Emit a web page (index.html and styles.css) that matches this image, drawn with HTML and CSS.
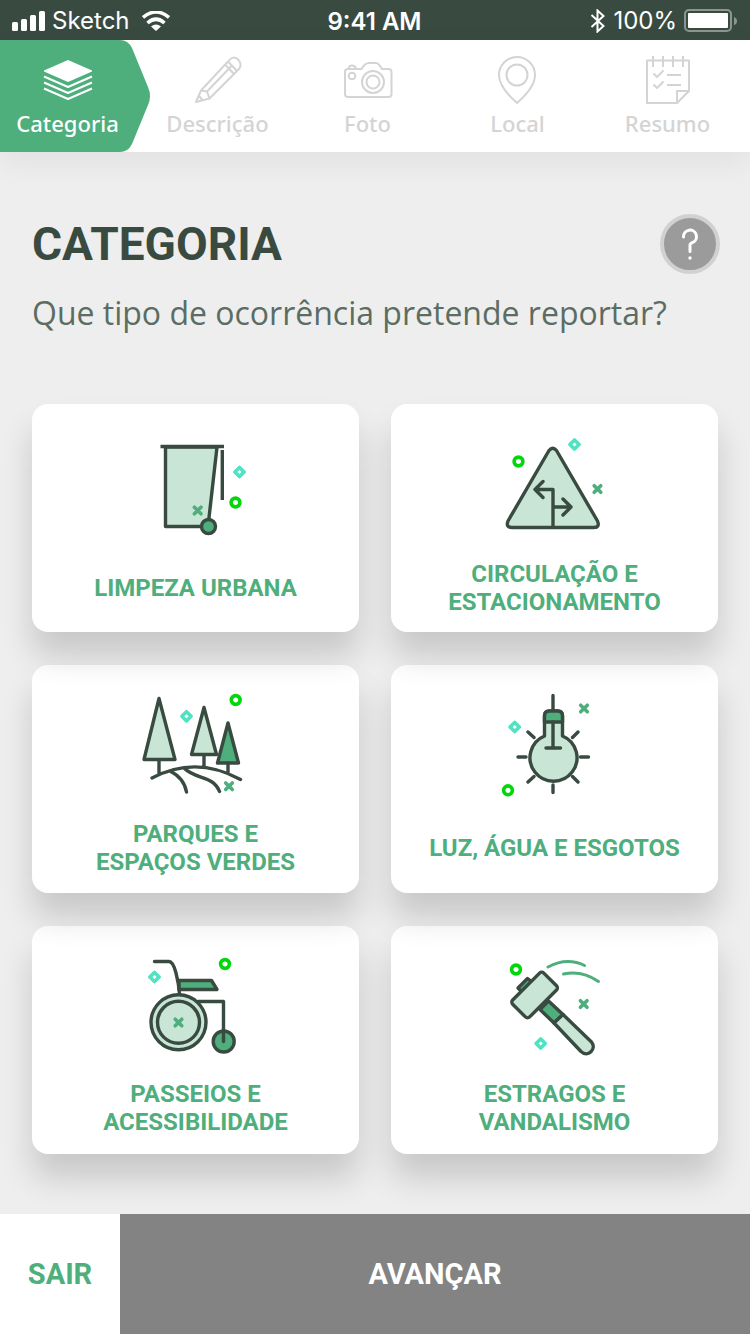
FILE: index.html
```html
<!DOCTYPE html>
<html lang="pt">
<head>
<meta charset="utf-8">
<meta name="viewport" content="width=device-width, initial-scale=1">
<title>Categoria</title>
<link rel="stylesheet" href="styles.css">
</head>
<body>
<svg class="sprite" aria-hidden="true">
  <symbol id="ring" viewBox="-7 -7 14 14"><circle r="4.4" fill="#fff" stroke="#00d80a" stroke-width="3.6"/></symbol>
  <symbol id="gem" viewBox="-7 -7 14 14"><path d="M0-4.600 4.600 0 0 4.600-4.600 0z" fill="#fff" stroke="#50e3c2" stroke-width="3.6" stroke-linejoin="round"/></symbol>
  <symbol id="cross" viewBox="-7 -7 14 14"><path d="M-3.300-3.300 3.300 3.300M3.300-3.300-3.300 3.300" stroke="#4eae7c" stroke-width="3.6" stroke-linecap="round"/></symbol>
</svg>
<div class="screen">
  <div class="status">
    <div class="status-side">
      <svg class="signal" viewBox="0 0 33 20" aria-hidden="true"><rect y="11" width="6" height="9" rx="1.5"/><rect x="9" y="8" width="6" height="12" rx="1.5"/><rect x="18" y="4" width="6" height="16" rx="1.5"/><rect x="27" width="6" height="20" rx="1.5"/></svg>
      <span class="carrier">Sketch</span>
      <svg class="wifi" viewBox="0 0 28 20" aria-hidden="true"><path d="M1 6.500Q14-4.500 27 6.500M5.500 12Q14 4.500 22.500 12" fill="none" stroke="#fff" stroke-width="3.600"/><path d="M9 15.500Q14 11.500 19 15.500L14 20z" fill="#fff"/></svg>
    </div>
    <time class="clock">9:41 AM</time>
    <div class="status-side status-end">
      <svg class="bluetooth" viewBox="0 0 16 24" aria-hidden="true"><path d="M1.500 6 13.500 17 7.500 22.500V1.500L13.500 7 1.500 18" fill="none" stroke="#fff" stroke-width="2"/></svg>
      <span>100%</span>
      <svg class="battery" viewBox="0 0 53 24" aria-hidden="true"><rect x="1" y="1" width="46" height="21" rx="4" fill="none" stroke="#8a968e" stroke-width="2"/><rect x="4" y="4" width="40" height="15" rx="1" fill="#fff"/><path d="M50 8q3 1 3 4t-3 4z" fill="#8a968e"/></svg>
    </div>
  </div>

  <nav class="steps">
    <a class="step step-active" href="#" aria-current="step">
      <svg class="step-shape" viewBox="0 0 150 112" preserveAspectRatio="none" aria-hidden="true"><path d="M0 0H120Q128 0 132 8L148 47Q152 56 148 65L132 104Q128 112 120 112H0z"/></svg>
      <svg class="step-icon" viewBox="0 0 56 56" aria-hidden="true"><path d="M28 8 52 18.500V19.500L28 30 4 19.500V18.500z" fill="currentColor" stroke="none"/><path d="M4 24.500 28 35 52 24.500M4 30.500 28 41 52 30.500M4 36.500 28 47 52 36.500"/></svg>
      <span class="step-label">Categoria</span>
    </a>
    <a class="step" href="#">
      <svg class="step-icon" viewBox="0 0 56 56" aria-hidden="true"><path d="M6 50 11 38.500 38 9.500Q43.500 2.500 48.500 8T47 19L19.500 46.500zM11 38.500 17 39.500 19.500 46.500M9 44 12.500 48M17 39.500 41.500 14M35 12.500 43.500 21.500M38 9.500 47 19"/></svg>
      <span class="step-label">Descrição</span>
    </a>
    <a class="step" href="#">
      <svg class="step-icon" viewBox="0 0 56 56" aria-hidden="true"><path d="M8 17H21.500Q25 11 29 11H36Q38.500 11 42 17H48.500Q51.500 17 51.500 20V42Q51.500 45 48.500 45H8Q5 45 5 42V20Q5 17 8 17zM9 17Q8.500 13.500 12 13.500T16 17"/><circle cx="33" cy="30" r="11"/><circle cx="33" cy="30" r="6.500"/><circle cx="12" cy="24" r="3.300"/></svg>
      <span class="step-label">Foto</span>
    </a>
    <a class="step" href="#">
      <svg class="step-icon" viewBox="0 0 56 56" aria-hidden="true"><path d="M27 51C19 44 9 34 9 23A18 18 0 0 1 45 23C45 34 35 44 27 51z"/><circle cx="27" cy="23" r="10.500"/></svg>
      <span class="step-label">Local</span>
    </a>
    <a class="step" href="#">
      <svg class="step-icon" viewBox="0 0 56 56" aria-hidden="true"><path d="M49 8.500H7V51H37L49 39zM37 51V39H49M13 4V15M23 4V15M33 4V15M43 4V15M13.500 21.500 17 25 23.500 18.500M13.500 32.500 17 36 23.500 29.500M27 23H41M27 33H41"/></svg>
      <span class="step-label">Resumo</span>
    </a>
  </nav>

  <main class="content">
    <header class="heading">
      <h1 class="title">CATEGORIA</h1>
      <button class="help" type="button" aria-label="Ajuda"><svg class="help-icon" viewBox="0 0 18 32" aria-hidden="true"><path d="M2.500 9A6.500 6.500 0 1 1 11 14.800Q9 15.500 9 17V23.500" fill="none" stroke="#fff" stroke-width="3" stroke-linecap="round" stroke-linejoin="round"/><circle cx="9" cy="30" r="1.700" fill="#fff"/></svg></button>
    </header>
    <p class="question">Que tipo de ocorrência pretende reportar?</p>

    <div class="cards">
      <button class="card row-one" type="button">
        <svg class="card-icon" viewBox="-4 0 140 140" aria-hidden="true"><g class="ink"><path class="pale" d="M35.500 27V106.500H78L87 27z"/><path class="square" d="M30.500 26.500H94M92.300 30V80"/><circle class="deep" cx="78.500" cy="106.500" r="7"/></g><use href="#gem" x="102.500" y="45" width="14" height="14"/><use href="#ring" x="98.500" y="75.500" width="14" height="14"/><use href="#cross" x="60.700" y="83.500" width="14" height="14"/></svg>
        <span class="card-label">LIMPEZA URBANA</span>
      </button>
      <button class="card row-one" type="button">
        <svg class="card-icon" viewBox="5 0 140 140" aria-hidden="true"><g class="ink"><path class="pale" d="M69 30.500Q72.700 26 76.500 30.500L117.500 101Q120 107.500 114 107.500H32Q25.500 107.500 28 101z"/><path d="M73 107V69.500H55M63 61.500 55 69.500 63 77.500M73 87H91M83 79 91 87 83 95"/></g><use href="#ring" x="31.500" y="34.500" width="14" height="14"/><use href="#gem" x="87.500" y="17.500" width="14" height="14"/><use href="#cross" x="110.500" y="62" width="14" height="14"/></svg>
        <span class="card-label">CIRCULAÇÃO E<br>ESTACIONAMENTO</span>
      </button>
      <button class="card row-two" type="button">
        <svg class="card-icon" viewBox="-4 0 140 140" aria-hidden="true"><g class="ink"><path class="pale" d="M29 18.500 14 79.500H45zM74 27.500 61.500 74.500H86.500z"/><path class="deep" d="M98 43 87.500 83H108.500z"/><path d="M29 80V93M74 75V87M98 83V92M22 98Q66 75 110.500 99.500M40 91Q54 98 56.500 112M54 88C66 100 83 95 89.500 111.500"/></g><use href="#gem" x="49.500" y="29.300" width="14" height="14"/><use href="#ring" x="98.700" y="13" width="14" height="14"/><use href="#cross" x="92" y="99.300" width="14" height="14"/></svg>
        <span class="card-label">PARQUES E<br>ESPAÇOS VERDES</span>
      </button>
      <button class="card row-two" type="button">
        <svg class="card-icon" viewBox="5 0 140 140" aria-hidden="true"><g class="ink"><path class="pale" d="M64.500 56V36Q64.500 31 69.500 31H77.500Q82.500 31 82.500 36V56A23.500 23.500 0 1 1 64.500 56z"/><path class="deep" d="M64.500 42V36Q64.500 31 69.500 31H77.500Q82.500 31 82.500 36V42z"/><path d="M73 15.500V30M73 42V68M66 68H80.500M38 77H46M100.500 77H108.500M73 105V112.500M48 52 54 57.500M98 52 92.500 57.500M48 102 54 96.500M98 102 92.500 96.500"/></g><use href="#gem" x="27.700" y="40" width="14" height="14"/><use href="#cross" x="97" y="21.500" width="14" height="14"/><use href="#ring" x="21" y="103.300" width="14" height="14"/></svg>
        <span class="card-label">LUZ, ÁGUA E ESGOTOS</span>
      </button>
      <button class="card row-three" type="button">
        <svg class="card-icon" viewBox="-4 0 140 140" aria-hidden="true"><g class="ink"><circle class="pale" cx="48.500" cy="82.300" r="27.500"/><circle cx="48.500" cy="82.300" r="21"/><path class="deep" d="M49 40.500H81.500L87 49.500H49z"/><circle class="deep" cx="93.700" cy="101.500" r="10.500"/><path d="M24.500 21.500H39Q43 21.500 46 33T49.500 54M68 61.500H93.500V101.500"/></g><use href="#gem" x="17.500" y="30" width="14" height="14"/><use href="#ring" x="88" y="17" width="14" height="14"/><use href="#cross" x="41.500" y="75.500" width="14" height="14"/></svg>
        <span class="card-label">PASSEIOS E<br>ACESSIBILIDADE</span>
      </button>
      <button class="card row-three" type="button">
        <svg class="card-icon" viewBox="5 0 140 140" aria-hidden="true"><g class="ink"><path class="deep" d="M60 69.500 68.500 61 83 74.500 74 83z"/><path class="pale" d="M74 83 101 111.500C108 118 117 109 111.500 102L83 74.500z"/><path class="deep" d="M42 52 38 48 47.500 38.500 52 42z"/><rect class="pale" x="32.600" y="43" width="44" height="24" rx="3" transform="rotate(-45 54.600 55)"/></g><path d="M68 27Q87 17 104.500 25.500M83.500 34Q102 30 118.500 41.500" fill="none" stroke="#4eae7c" stroke-width="3" stroke-linecap="round"/><use href="#ring" x="29" y="22.500" width="14" height="14"/><use href="#cross" x="96.700" y="57" width="14" height="14"/><use href="#gem" x="53.700" y="96.500" width="14" height="14"/></svg>
        <span class="card-label">ESTRAGOS E<br>VANDALISMO</span>
      </button>
    </div>
  </main>

  <footer class="actions">
    <button class="exit" type="button">SAIR</button>
    <button class="next" type="button">AVANÇAR</button>
  </footer>
</div>
</body>
</html>
```
FILE: styles.css
```css
* { box-sizing: border-box; }

body {
  margin: 0;
  background: #eee;
  font-family: "Noto Sans", sans-serif;
}

.sprite { display: block; width: 0; height: 0; }

.screen {
  display: flex;
  flex-direction: column;
  min-height: 100vh;
}

button {
  border: 0;
  padding: 0;
  font-family: Roboto, sans-serif;
  font-weight: 700;
  cursor: pointer;
}

/* Status bar */
.status {
  display: grid;
  grid-template-columns: 1fr auto 1fr;
  align-items: center;
  height: 40px;
  padding: 0 13px 0 12px;
  background: #394b41;
  color: #fff;
  font: 400 24px/40px Inter, sans-serif;
}
.status-side { display: flex; align-items: center; gap: 7px; }
.status-end { justify-content: flex-end; }
.signal { width: 33px; height: 20px; fill: #fff; }
.carrier { padding-right: 5px; }
.wifi { width: 28px; height: 20px; }
.clock { font-weight: 600; padding-top: 2px; }
.bluetooth { width: 16px; height: 24px; }
.battery { width: 53px; height: 24px; }

/* Step navigation */
.steps {
  display: grid;
  grid-template-columns: repeat(5, 1fr);
  background: #fff;
  box-shadow: 0 10px 30px rgba(0, 0, 0, 0.06);
}
.step {
  display: flex;
  flex-direction: column;
  align-items: center;
  gap: 2px;
  padding: 12px 15px 16px 0;
  color: #d4d4d4;
  text-decoration: none;
}
.step-active { position: relative; color: #fff; }
.step-shape {
  position: absolute;
  inset: 0;
  width: 100%;
  height: 100%;
  fill: #4eae7c;
}
.step-icon {
  position: relative;
  width: 56px;
  height: 56px;
  fill: none;
  stroke: currentColor;
  stroke-width: 2;
  stroke-linejoin: round;
}
.step-label {
  position: relative;
  font-size: 22px;
  font-weight: 500;
  line-height: 26px;
}

/* Page content */
.content { flex: 1; padding: 62px 32px 60px; }
.heading {
  display: flex;
  align-items: center;
  justify-content: space-between;
  margin-right: -2px;
}
.title {
  margin: 0;
  color: #394b41;
  font: 700 46px/60px Roboto, sans-serif;
}
.help {
  display: grid;
  place-items: center;
  width: 60px;
  height: 60px;
  border: 4px solid #d1d1d1;
  border-radius: 50%;
  background: #9b9b9b;
}
.help-icon { width: 18px; height: 32px; }
.question {
  margin: 16px 0 68px;
  color: #5b6d63;
  font: 400 32px/46px "Open Sans", sans-serif;
}

/* Category cards: each row casts its shadow over the one below */
.cards {
  display: grid;
  grid-template-columns: 1fr 1fr;
  gap: 33px 32px;
}
.card {
  position: relative;
  display: flex;
  flex-direction: column;
  align-items: center;
  border-radius: 16px;
  background: #fff;
  box-shadow: 0 24px 32px rgba(0, 0, 0, 0.16);
}
.row-one { z-index: 3; padding: 16px 8px; }
.row-two { z-index: 2; padding: 15px 8px 17px; }
.row-three { z-index: 1; padding: 14px 8px 18px; }
.card-icon { width: 140px; height: 140px; }
.card-label {
  display: grid;
  place-content: center;
  min-height: 56px;
  color: #4eae7c;
  font-size: 24px;
  line-height: 28px;
}
.ink {
  fill: none;
  stroke: #394b41;
  stroke-width: 3.4px;
  stroke-linecap: round;
  stroke-linejoin: round;
}
.pale { fill: #c8e5d6; }
.deep { fill: #4eae7c; }
.square { stroke-linecap: butt; }

/* Bottom actions */
.actions {
  position: relative;
  z-index: 4;
  display: grid;
  grid-template-columns: 120px 1fr;
  height: 120px;
}
.exit, .next { font-size: 29px; }
.exit { background: #fff; color: #4eae7c; }
.next { background: #838383; color: #fff; }
```
